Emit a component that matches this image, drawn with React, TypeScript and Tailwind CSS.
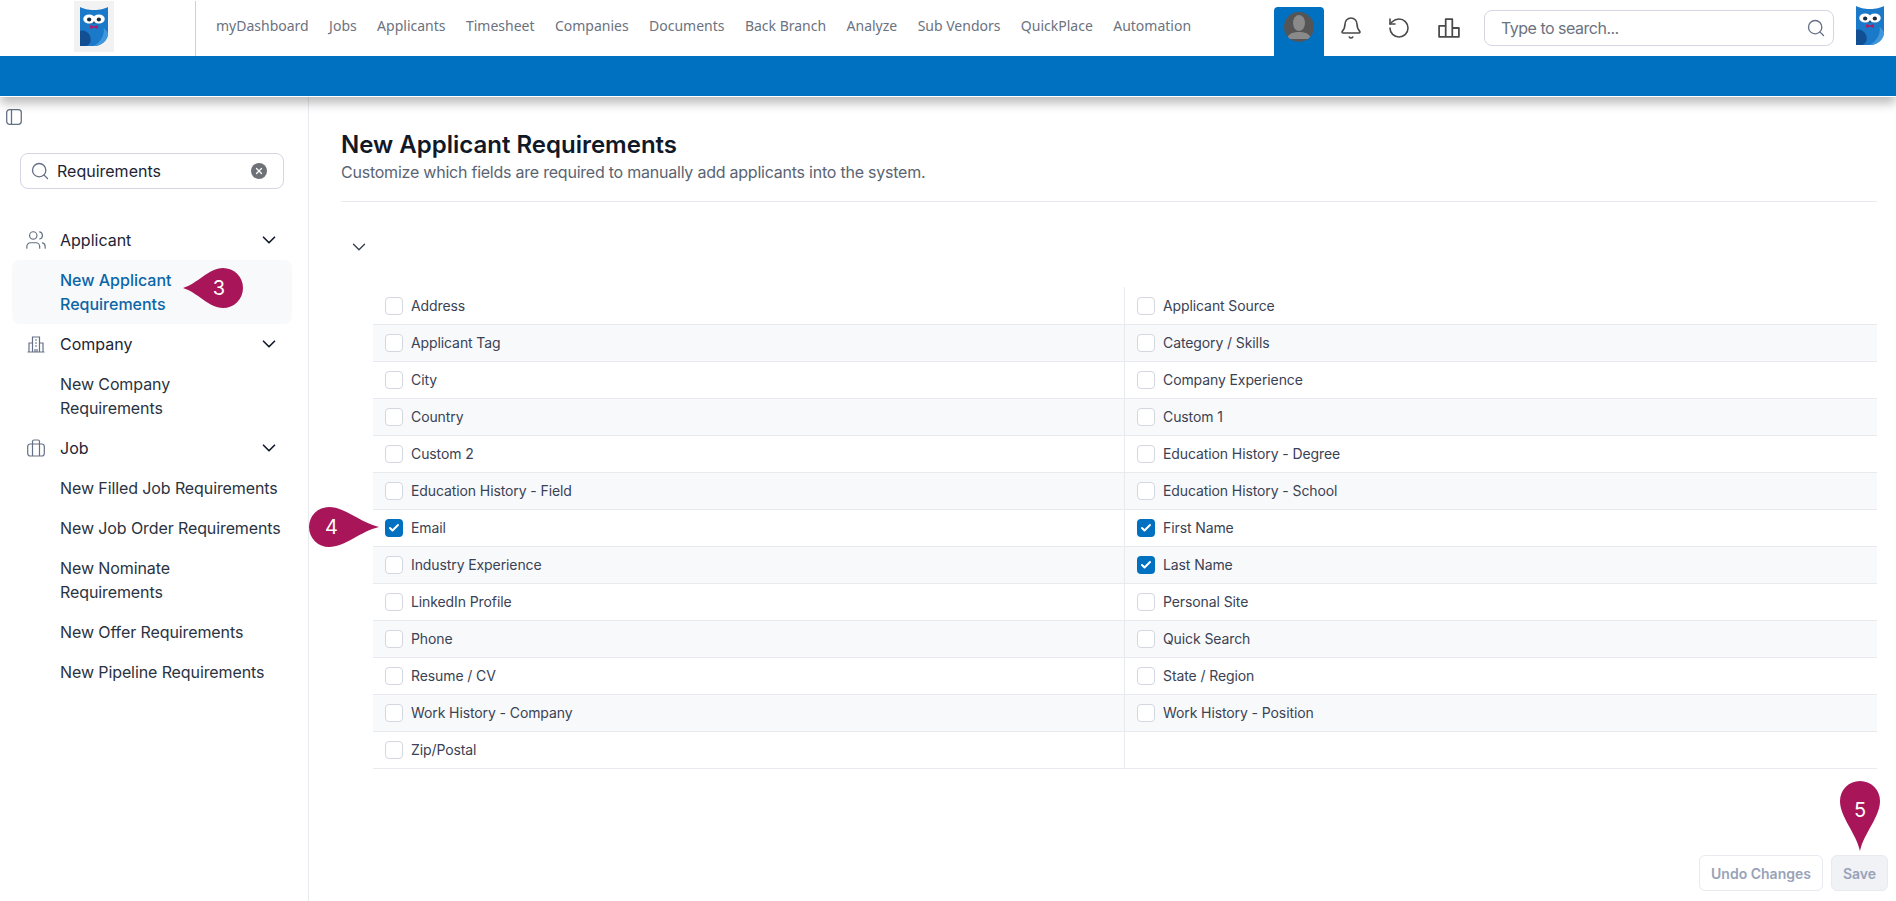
import { Bell, ChevronDown, RotateCcw, Search, Users, X, Check } from "lucide-react";

const navItems = [
  "myDashboard",
  "Jobs",
  "Applicants",
  "Timesheet",
  "Companies",
  "Documents",
  "Back Branch",
  "Analyze",
  "Sub Vendors",
  "QuickPlace",
  "Automation",
];

const fields: [string, boolean, string | null, boolean][] = [
  ["Address", false, "Applicant Source", false],
  ["Applicant Tag", false, "Category / Skills", false],
  ["City", false, "Company Experience", false],
  ["Country", false, "Custom 1", false],
  ["Custom 2", false, "Education History - Degree", false],
  ["Education History - Field", false, "Education History - School", false],
  ["Email", true, "First Name", true],
  ["Industry Experience", false, "Last Name", true],
  ["LinkedIn Profile", false, "Personal Site", false],
  ["Phone", false, "Quick Search", false],
  ["Resume / CV", false, "State / Region", false],
  ["Work History - Company", false, "Work History - Position", false],
  ["Zip/Postal", false, null, false],
];

function Owl({ className }: { className: string }) {
  return (
    <svg viewBox="0 0 26 39" preserveAspectRatio="none" className={className}>
      <path d="M0 0 C4 2 7 3 13 3 C19 3 22 2 26 0 V26 C26 33 20 39 13 39 H0 Z" fill="#1b79c9" />
      <path d="M0 24 C5 22 10 27 10 33 C10 36 8 38 6 39 H0 Z" fill="#114f92" />
      <path d="M12 39 C19 36 23 28 22 21 C25 24 26 25 26 27 C26 33 20 39 13 39 Z" fill="#3f97dc" />
      <ellipse cx="8.5" cy="12" rx="5.5" ry="4.5" fill="#fff" />
      <ellipse cx="17.5" cy="12" rx="5.5" ry="4.5" fill="#fff" />
      <circle cx="8.5" cy="12.5" r="2" fill="#1c2b3a" />
      <circle cx="17.5" cy="12.5" r="2" fill="#1c2b3a" />
      <path d="M13 14 L11.8 16.5 H14.2 Z" fill="#33475b" />
      <path d="M9.5 18 L13 19.5 L16.5 18 V22 L13 20.5 L9.5 22 Z" fill="#b3195f" />
    </svg>
  );
}

function CheckBox({ checked }: { checked: boolean }) {
  if (checked) {
    return (
      <span className="flex h-[18px] w-[18px] shrink-0 items-center justify-center rounded-[4px] bg-[#0070c0]">
        <Check className="h-3 w-3 text-white" strokeWidth={4} />
      </span>
    );
  }
  return <span className="h-[18px] w-[18px] shrink-0 rounded-[4px] border border-[#d5d7e0] bg-white" />;
}

function NavHead({ icon, label }: { icon: React.ReactNode; label: string }) {
  return (
    <div className="flex h-[40px] items-center pl-[27px] pr-[28px]">
      <span className="flex w-[33px] shrink-0 items-center">{icon}</span>
      <span className="flex-1 text-[16px] text-[#1d2535]">{label}</span>
      <ChevronDown className="h-[22px] w-[22px] text-[#111827]" strokeWidth={1.8} />
    </div>
  );
}

function NavLink({ lines }: { lines: string[] }) {
  return (
    <div className="py-2 pl-[60px] text-[16px] leading-6 tracking-[-0.1px] text-[#2a3342]">
      {lines.map((l) => (
        <div key={l}>{l}</div>
      ))}
    </div>
  );
}

export default function App() {
  return (
    <div className="flex h-[901px] w-[1896px] flex-col overflow-hidden bg-white font-['Inter',sans-serif]">
      {/* top bar */}
      <header className="relative z-10 shadow-[0_6px_10px_rgba(0,0,0,0.28)]">
        <div className="flex h-[56px] items-stretch bg-white">
          <div className="w-[74px]" />
          <div className="mt-[1px] flex h-[51px] w-[40px] items-center justify-center bg-[#f2f2f2]">
            <Owl className="h-[39px] w-[28px]" />
          </div>
          <div className="ml-[81px] mt-[1px] w-px bg-[#cfd1d4]" />
          <nav className="ml-[20px] flex w-[1058px] items-center gap-[20.4px] pb-[5px] font-['Noto_Sans',sans-serif] text-[14px] text-[#6b7280]">
            {navItems.map((n) => (
              <span key={n}>{n}</span>
            ))}
          </nav>
          <div className="mt-[7px] flex w-[50px] justify-center rounded-t-[4px] bg-[#0070c0]">
            <div className="mt-[5px] flex h-[30px] w-[30px] items-end justify-center overflow-hidden rounded-full bg-[#555]">
              <svg viewBox="0 0 30 30" className="h-[30px] w-[30px]">
                <ellipse cx="15" cy="11" rx="6" ry="8" fill="#8a8a8a" />
                <path d="M3 27 C4 21 10 20 15 20 C20 20 26 21 27 27 Z" fill="#8a8a8a" />
              </svg>
            </div>
          </div>
          <div className="ml-[15px] flex items-center pb-[1px]">
            <Bell className="h-[24px] w-[24px] text-[#4a4a4a]" strokeWidth={1.6} />
          </div>
          <div className="ml-[24px] flex items-center pb-[1px]">
            <RotateCcw className="h-[24px] w-[24px] text-[#4a4a4a]" strokeWidth={1.6} />
          </div>
          <div className="ml-[27px] flex items-center pb-[1px]">
            <svg viewBox="0 0 20 20" className="h-[22px] w-[22px]" fill="none" stroke="#4a4a4a" strokeWidth="1.6">
              <path d="M1 18 V8 H7 V18 Z M7 18 V2 H13 V18 Z M13 18 V10 H19 V18 Z" strokeLinejoin="round" />
            </svg>
          </div>
          <div className="ml-[24px] mt-[10px] flex h-[36px] w-[350px] items-center rounded-[8px] border border-[#d5d5e3] pl-4 pr-[7px]">
            <span className="flex-1 text-[16px] tracking-[-0.5px] text-[#6b7280]">Type to search...</span>
            <Search className="h-5 w-5 text-[#667085]" strokeWidth={1.6} />
          </div>
          <div className="ml-[22px] mt-[6px]">
            <Owl className="h-[39px] w-[28px]" />
          </div>
        </div>
        <div className="h-[40px] bg-[#0070c0]" />
        <div className="h-px bg-white" />
      </header>

      <div className="flex min-h-0 flex-1">
        {/* settings sidebar */}
        <aside className="w-[309px] shrink-0 border-r border-[#e8eaef]">
          <div className="pl-[6px] pt-[12px]">
            <svg viewBox="0 0 16 16" className="h-4 w-4" fill="none" stroke="#667085" strokeWidth="1.3">
              <rect x="0.7" y="0.7" width="14.6" height="14.6" rx="3" />
              <path d="M5.5 1 V15" />
            </svg>
          </div>
          <div className="ml-5 mt-[28px] flex h-[36px] w-[264px] items-center rounded-[8px] border border-[#d5d5e3] pl-[9px] pr-4">
            <Search className="h-5 w-5 text-[#667085]" strokeWidth={1.6} />
            <span className="ml-[7px] flex-1 text-[16px] text-[#1d2535]">Requirements</span>
            <span className="flex h-4 w-4 items-center justify-center rounded-full bg-[#6f7178]">
              <X className="h-[10px] w-[10px] text-white" strokeWidth={3} />
            </span>
          </div>
          <div className="mt-[31px]">
            <NavHead icon={<Users className="ml-[-2px] h-[22px] w-[22px] text-[#667085]" strokeWidth={1.3} />} label="Applicant" />
            <div className="ml-3 h-[64px] w-[280px] rounded-[8px] bg-[#f8f9fb] pl-[48px] pt-2 text-[16px] font-medium leading-6 text-[#0b66a8]">
              <div>New Applicant</div>
              <div>Requirements</div>
            </div>
            <NavHead
              icon={
                <svg viewBox="0 0 18 18" className="h-[18px] w-[18px]" fill="none" stroke="#667085" strokeWidth="1.2">
                  <path d="M0.5 17 H17.5 M2 17 V8 H5.5 M5.5 17 V2 H12.5 V17 M12.5 8 H16 V17 M8 5 H10 M8 8 H10 M8 11 H10 M8 14 V17 M10 14 V17" />
                </svg>
              }
              label="Company"
            />
            <NavLink lines={["New Company", "Requirements"]} />
            <NavHead
              icon={
                <svg viewBox="0 0 18 18" className="h-[18px] w-[18px]" fill="none" stroke="#667085" strokeWidth="1.2">
                  <rect x="0.7" y="5" width="16.6" height="12" rx="2.5" />
                  <path d="M5.5 5 V17 M12.5 5 V17 M5.5 5 V2.5 C5.5 1.5 6.2 1 7 1 H11 C11.8 1 12.5 1.5 12.5 2.5 V5" />
                </svg>
              }
              label="Job"
            />
            <NavLink lines={["New Filled Job Requirements"]} />
            <NavLink lines={["New Job Order Requirements"]} />
            <NavLink lines={["New Nominate", "Requirements"]} />
            <NavLink lines={["New Offer Requirements"]} />
            <NavLink lines={["New Pipeline Requirements"]} />
          </div>
        </aside>

        {/* requirements form */}
        <main className="relative flex min-w-0 flex-1 flex-col pl-[32px] pr-[19px] pt-[33px]">
          <h1 className="text-[24px] font-semibold leading-[30px] text-[#111827]">New Applicant Requirements</h1>
          <p className="text-[16px] leading-6 tracking-[-0.23px] text-[#5a6472]">
            Customize which fields are required to manually add applicants into the system.
          </p>
          <div className="mt-[17px] h-px bg-[#e8eaef]" />
          <div className="ml-[7px] mt-[34px]">
            <ChevronDown className="h-[22px] w-[22px] text-[#374151]" strokeWidth={1.5} />
          </div>
          <div className="ml-[32px] mt-[29px] border-b border-[#e8eaef]">
            {fields.map(([a, ac, b, bc], i) => (
              <div
                key={a}
                className={`flex h-[37px] items-center text-[14px] tracking-[-0.1px] text-[#3a4254] ${i % 2 ? "bg-[#f8f9fb]" : "bg-white"} ${i ? "border-t border-[#e8eaef]" : ""}`}
              >
                <div className="flex h-full w-[752px] items-center gap-2 border-r border-[#e8eaef] pl-3">
                  <CheckBox checked={ac} />
                  <span className="pb-[1px]">{a}</span>
                </div>
                {b && (
                  <div className="flex h-full flex-1 items-center gap-2 pl-3">
                    <CheckBox checked={bc} />
                    <span className="pb-[1px]">{b}</span>
                  </div>
                )}
              </div>
            ))}
          </div>
          <div className="mt-auto mb-[10px] mr-[-11px] flex justify-end gap-2">
            <button className="h-[36px] w-[124px] rounded-[6px] border border-[#e8eaef] bg-white text-[14px] font-semibold text-[#98a2b8]">
              Undo Changes
            </button>
            <button className="h-[36px] w-[57px] rounded-[6px] border border-[#e8eaef] bg-[#f1f2f6] text-[14px] font-semibold text-[#98a2b8]">
              Save
            </button>
          </div>

          {/* callouts from the help article */}
          <div className="absolute left-[-126px] top-[171px] h-[40px] w-[60px]">
            <svg viewBox="0 0 60 40" className="h-full w-full">
              <path d="M0 20 C14 16 26 0 40 0 A20 20 0 0 1 40 40 C26 40 14 24 0 20 Z" fill="#a81558" />
            </svg>
            <span className="absolute inset-0 flex items-center justify-center pl-[12px] text-[20px] text-white">3</span>
          </div>
          <div className="absolute left-0 top-[410px] h-[40px] w-[70px]">
            <svg viewBox="0 0 70 40" className="h-full w-full">
              <path d="M70 20 C52 16 36 0 20 0 A20 20 0 0 0 20 40 C36 40 52 24 70 20 Z" fill="#a81558" />
            </svg>
            <span className="absolute inset-0 flex items-center justify-center pr-[25px] text-[20px] text-white">4</span>
          </div>
          <div className="absolute left-[1531px] top-[684px] h-[70px] w-[40px]">
            <svg viewBox="0 0 40 70" className="h-full w-full">
              <path d="M20 70 C16 52 0 36 0 20 A20 20 0 0 1 40 20 C40 36 24 52 20 70 Z" fill="#a81558" />
            </svg>
            <span className="absolute inset-x-0 top-[14px] text-center text-[20px] text-white">5</span>
          </div>
        </main>
      </div>
    </div>
  );
}
